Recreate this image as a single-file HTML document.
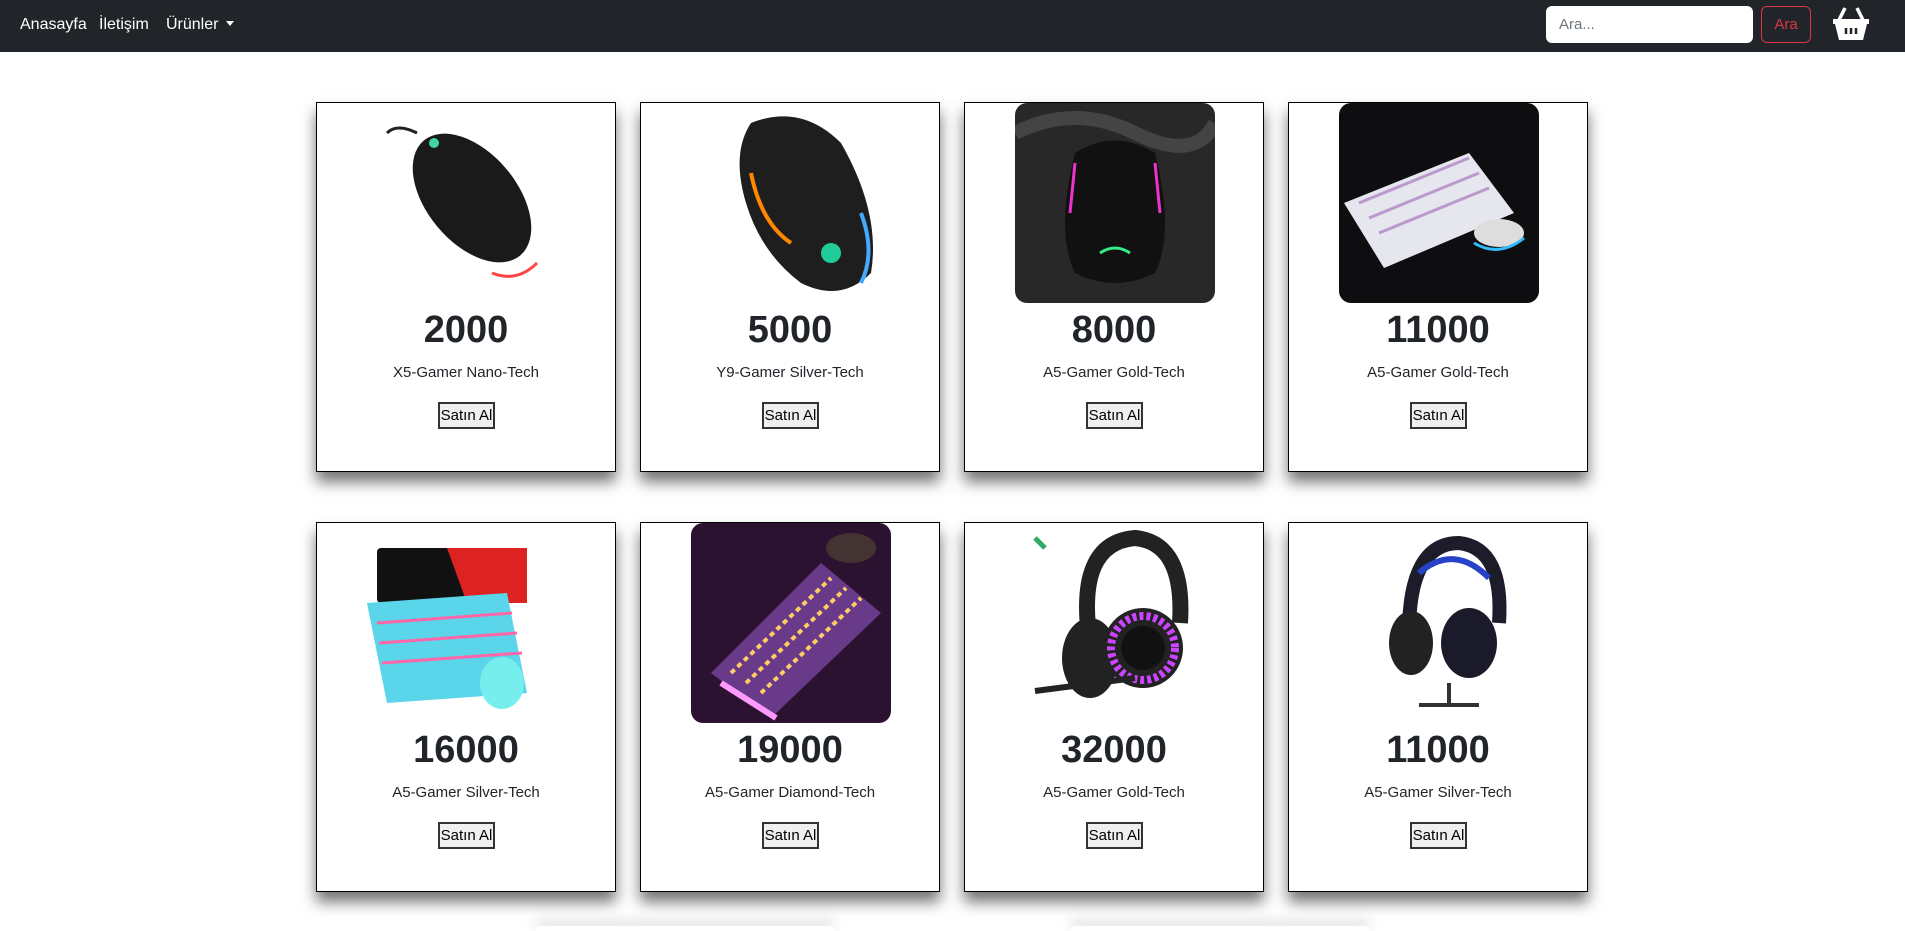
<!DOCTYPE html>
<html><head><meta charset="utf-8"><style>
*{box-sizing:border-box;margin:0;padding:0}
html,body{width:1905px;height:931px;overflow:hidden}
body{background:#fff;font-family:"Liberation Sans",sans-serif;position:relative}
#wrap{position:absolute;left:0;top:0;width:1905px;height:931px;overflow:hidden}
.nav{position:absolute;left:0;top:0;width:1905px;height:52px;background:#212529}
.nav a{position:absolute;top:16px;color:#fff;font-size:16px;text-decoration:none}
.caret{display:inline-block;border-left:4px solid transparent;border-right:4px solid transparent;border-top:5px solid #fff;margin-left:8px;vertical-align:3px}
.search{position:absolute;left:1546px;top:6px;width:207px;height:37px;background:#fff;border-radius:6px;color:#6c757d;font-size:15px;padding:10px 13px}
.btn{position:absolute;left:1761px;top:6px;width:50px;height:37px;border:1px solid #dc3545;border-radius:6px;color:#dc3545;font-size:15px;text-align:center;line-height:35px}
.card{position:absolute;width:300px;height:370px;border:1.5px solid #000;background:#fff;box-shadow:0 10px 14px rgba(0,0,0,.55);text-align:center}
.img{position:absolute;left:50px;top:0;width:200px;height:200px}
.price{position:absolute;left:0;right:0;top:206px;font-size:38px;font-weight:600;color:#212529}
.name{position:absolute;left:0;right:0;top:261px;font-size:15px;color:#212529}
.buy{position:absolute;left:121px;top:299px;width:57px;height:27px;border:2px solid #333;background:#efefef;font-size:15px;line-height:23px;color:#000}
.blob{position:absolute;top:926px;width:300px;height:5px;border-radius:6px 6px 0 0;background:#fff;box-shadow:0 -4px 12px rgba(0,0,0,.22)}
</style></head><body><div id="wrap">
<div class="nav">
<a style="left:20px">Anasayfa</a><a style="left:99px">İletişim</a><a style="left:166px">Ürünler<span class="caret"></span></a>
<div class="search">Ara...</div><div class="btn">Ara</div>
<svg style="position:absolute;left:1832px;top:6px" width="38" height="36" viewBox="0 0 38 36"><path d="M13 2 L7 14 M25 2 L31 14" stroke="#fff" stroke-width="3.5" fill="none"/><path d="M1 13 H37 V18 H35 L31 34 H7 L3 18 H1Z" fill="#fff"/><path d="M14 22v6M19 22v6M24 22v6" stroke="#212529" stroke-width="2.5"/></svg>
</div>

<div class="card" style="left:316px;top:102px">
<svg class="img" viewBox="0 0 200 200"><ellipse cx="105" cy="95" rx="45" ry="75" transform="rotate(-40 105 95)" fill="#1a1a1a"/><path d="M20 30 Q30 20 50 30" stroke="#222" stroke-width="3" fill="none"/><path d="M125 170 Q150 180 170 160" stroke="#f44" stroke-width="3" fill="none"/><circle cx="67" cy="40" r="5" fill="#3fd6a0"/></svg>
<div class="price">2000</div><div class="name">X5-Gamer Nano-Tech</div><div class="buy">Satın Al</div></div>
<div class="card" style="left:640px;top:102px">
<svg class="img" viewBox="0 0 200 200"><path d="M60 20 Q110 0 150 40 Q190 110 180 170 Q150 200 110 180 Q70 150 55 100 Q40 50 60 20Z" fill="#1e1e1e"/><path d="M60 70 Q70 120 100 140" stroke="#f80" stroke-width="4" fill="none"/><path d="M170 110 Q185 150 170 180" stroke="#4af" stroke-width="4" fill="none"/><circle cx="140" cy="150" r="10" fill="#2c9"/></svg>
<div class="price">5000</div><div class="name">Y9-Gamer Silver-Tech</div><div class="buy">Satın Al</div></div>
<div class="card" style="left:964px;top:102px">
<svg class="img" viewBox="0 0 200 200"><rect width="200" height="200" rx="12" fill="#282828"/><path d="M0 30 Q60 0 120 30 T200 20" stroke="#444" stroke-width="14" fill="none"/><path d="M60 50 Q100 25 140 50 Q160 130 140 170 Q100 190 60 170 Q40 130 60 50Z" fill="#111"/><path d="M60 60 L55 110 M140 60 L145 110" stroke="#e3c" stroke-width="3"/><path d="M85 150 Q100 140 115 150" stroke="#3e8" stroke-width="3" fill="none"/></svg>
<div class="price">8000</div><div class="name">A5-Gamer Gold-Tech</div><div class="buy">Satın Al</div></div>
<div class="card" style="left:1288px;top:102px">
<svg class="img" viewBox="0 0 200 200"><rect width="200" height="200" rx="12" fill="#0e0e10"/><path d="M5 100 L130 50 L175 110 L45 165Z" fill="#e6e6ee"/><path d="M20 100 L130 55 M30 115 L140 70 M40 130 L150 85" stroke="#b9c" stroke-width="3"/><ellipse cx="160" cy="130" rx="25" ry="14" fill="#ddd"/><path d="M135 140 Q160 155 185 135" stroke="#3bf" stroke-width="3" fill="none"/></svg>
<div class="price">11000</div><div class="name">A5-Gamer Gold-Tech</div><div class="buy">Satın Al</div></div>

<div class="card" style="left:316px;top:522px">
<svg class="img" viewBox="0 0 200 200"><rect x="10" y="25" width="150" height="55" rx="4" fill="#111"/><path d="M80 25 H160 V80 H100Z" fill="#d22"/><path d="M0 80 L140 70 L160 170 L20 180Z" fill="#5ad5ea"/><path d="M10 100 L145 90 M12 120 L150 110 M15 140 L155 130" stroke="#f6a" stroke-width="3"/><ellipse cx="135" cy="160" rx="22" ry="26" fill="#7ee"/></svg>
<div class="price">16000</div><div class="name">A5-Gamer Silver-Tech</div><div class="buy">Satın Al</div></div>
<div class="card" style="left:640px;top:522px">
<svg class="img" viewBox="0 0 200 200"><rect width="200" height="200" rx="12" fill="#2a1230"/><ellipse cx="160" cy="25" rx="25" ry="15" fill="#433"/><path d="M20 150 L130 40 L190 90 L80 195Z" fill="#6a3a8a"/><path d="M40 150 L140 55 M55 160 L155 65 M70 170 L170 75" stroke="#fc6" stroke-width="4" stroke-dasharray="5 4"/><path d="M30 160 L85 195" stroke="#f9f" stroke-width="6"/></svg>
<div class="price">19000</div><div class="name">A5-Gamer Diamond-Tech</div><div class="buy">Satın Al</div></div>
<div class="card" style="left:964px;top:522px">
<svg class="img" viewBox="0 0 200 200"><path d="M75 120 Q60 20 120 15 Q170 20 165 100" stroke="#222" stroke-width="16" fill="none"/><ellipse cx="75" cy="135" rx="28" ry="40" fill="#222"/><circle cx="128" cy="125" r="40" fill="#222"/><circle cx="128" cy="125" r="32" fill="none" stroke="#c4f" stroke-width="8" stroke-dasharray="4 3"/><circle cx="128" cy="125" r="22" fill="#111"/><path d="M20 168 L120 155" stroke="#222" stroke-width="6"/><path d="M20 15 l10 10" stroke="#3a6" stroke-width="5"/></svg>
<div class="price">32000</div><div class="name">A5-Gamer Gold-Tech</div><div class="buy">Satın Al</div></div>
<div class="card" style="left:1288px;top:522px">
<svg class="img" viewBox="0 0 200 200"><path d="M70 110 Q70 20 120 20 Q165 25 160 100" stroke="#1c1c2a" stroke-width="14" fill="none"/><path d="M80 50 Q115 20 150 55" stroke="#2642c8" stroke-width="6" fill="none"/><ellipse cx="72" cy="120" rx="22" ry="32" fill="#222"/><ellipse cx="130" cy="120" rx="28" ry="35" fill="#1a1a2a"/><path d="M110 160 L110 180 M80 182 H140" stroke="#333" stroke-width="4"/></svg>
<div class="price">11000</div><div class="name">A5-Gamer Silver-Tech</div><div class="buy">Satın Al</div></div>

<div class="blob" style="left:535px"></div>
<div class="blob" style="left:1070px"></div>
</div></body></html>
